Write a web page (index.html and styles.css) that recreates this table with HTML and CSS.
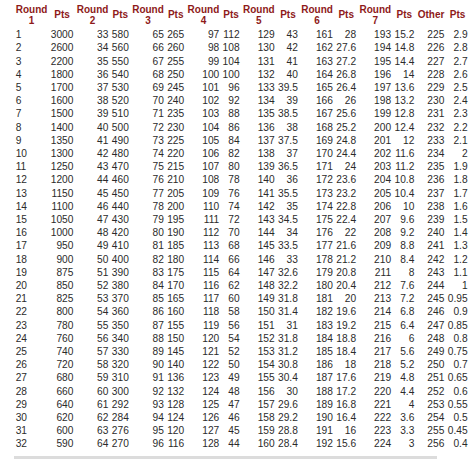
FILE: index.html
```html
<!DOCTYPE html>
<html>
<head>
<meta charset="utf-8">
<title>Points by pick</title>
<link rel="stylesheet" href="styles.css">
</head>
<body>
<div class="page">
<table class="scores">
<thead>
<tr><th>Round<br>1</th><th>Pts</th><th>Round<br>2</th><th>Pts</th><th>Round<br>3</th><th>Pts</th><th>Round<br>4</th><th>Pts</th><th>Round<br>5</th><th>Pts</th><th>Round<br>6</th><th>Pts</th><th>Round<br>7</th><th>Pts</th><th>Other</th><th>Pts</th></tr>
</thead>
<tbody>
<tr><td>1</td><td>3000</td><td>33</td><td>580</td><td>65</td><td>265</td><td>97</td><td>112</td><td>129</td><td>43</td><td>161</td><td>28</td><td>193</td><td>15.2</td><td>225</td><td>2.9</td></tr>
<tr><td>2</td><td>2600</td><td>34</td><td>560</td><td>66</td><td>260</td><td>98</td><td>108</td><td>130</td><td>42</td><td>162</td><td>27.6</td><td>194</td><td>14.8</td><td>226</td><td>2.8</td></tr>
<tr><td>3</td><td>2200</td><td>35</td><td>550</td><td>67</td><td>255</td><td>99</td><td>104</td><td>131</td><td>41</td><td>163</td><td>27.2</td><td>195</td><td>14.4</td><td>227</td><td>2.7</td></tr>
<tr><td>4</td><td>1800</td><td>36</td><td>540</td><td>68</td><td>250</td><td>100</td><td>100</td><td>132</td><td>40</td><td>164</td><td>26.8</td><td>196</td><td>14</td><td>228</td><td>2.6</td></tr>
<tr><td>5</td><td>1700</td><td>37</td><td>530</td><td>69</td><td>245</td><td>101</td><td>96</td><td>133</td><td>39.5</td><td>165</td><td>26.4</td><td>197</td><td>13.6</td><td>229</td><td>2.5</td></tr>
<tr><td>6</td><td>1600</td><td>38</td><td>520</td><td>70</td><td>240</td><td>102</td><td>92</td><td>134</td><td>39</td><td>166</td><td>26</td><td>198</td><td>13.2</td><td>230</td><td>2.4</td></tr>
<tr><td>7</td><td>1500</td><td>39</td><td>510</td><td>71</td><td>235</td><td>103</td><td>88</td><td>135</td><td>38.5</td><td>167</td><td>25.6</td><td>199</td><td>12.8</td><td>231</td><td>2.3</td></tr>
<tr><td>8</td><td>1400</td><td>40</td><td>500</td><td>72</td><td>230</td><td>104</td><td>86</td><td>136</td><td>38</td><td>168</td><td>25.2</td><td>200</td><td>12.4</td><td>232</td><td>2.2</td></tr>
<tr><td>9</td><td>1350</td><td>41</td><td>490</td><td>73</td><td>225</td><td>105</td><td>84</td><td>137</td><td>37.5</td><td>169</td><td>24.8</td><td>201</td><td>12</td><td>233</td><td>2.1</td></tr>
<tr><td>10</td><td>1300</td><td>42</td><td>480</td><td>74</td><td>220</td><td>106</td><td>82</td><td>138</td><td>37</td><td>170</td><td>24.4</td><td>202</td><td>11.6</td><td>234</td><td>2</td></tr>
<tr><td>11</td><td>1250</td><td>43</td><td>470</td><td>75</td><td>215</td><td>107</td><td>80</td><td>139</td><td>36.5</td><td>171</td><td>24</td><td>203</td><td>11.2</td><td>235</td><td>1.9</td></tr>
<tr><td>12</td><td>1200</td><td>44</td><td>460</td><td>76</td><td>210</td><td>108</td><td>78</td><td>140</td><td>36</td><td>172</td><td>23.6</td><td>204</td><td>10.8</td><td>236</td><td>1.8</td></tr>
<tr><td>13</td><td>1150</td><td>45</td><td>450</td><td>77</td><td>205</td><td>109</td><td>76</td><td>141</td><td>35.5</td><td>173</td><td>23.2</td><td>205</td><td>10.4</td><td>237</td><td>1.7</td></tr>
<tr><td>14</td><td>1100</td><td>46</td><td>440</td><td>78</td><td>200</td><td>110</td><td>74</td><td>142</td><td>35</td><td>174</td><td>22.8</td><td>206</td><td>10</td><td>238</td><td>1.6</td></tr>
<tr><td>15</td><td>1050</td><td>47</td><td>430</td><td>79</td><td>195</td><td>111</td><td>72</td><td>143</td><td>34.5</td><td>175</td><td>22.4</td><td>207</td><td>9.6</td><td>239</td><td>1.5</td></tr>
<tr><td>16</td><td>1000</td><td>48</td><td>420</td><td>80</td><td>190</td><td>112</td><td>70</td><td>144</td><td>34</td><td>176</td><td>22</td><td>208</td><td>9.2</td><td>240</td><td>1.4</td></tr>
<tr><td>17</td><td>950</td><td>49</td><td>410</td><td>81</td><td>185</td><td>113</td><td>68</td><td>145</td><td>33.5</td><td>177</td><td>21.6</td><td>209</td><td>8.8</td><td>241</td><td>1.3</td></tr>
<tr><td>18</td><td>900</td><td>50</td><td>400</td><td>82</td><td>180</td><td>114</td><td>66</td><td>146</td><td>33</td><td>178</td><td>21.2</td><td>210</td><td>8.4</td><td>242</td><td>1.2</td></tr>
<tr><td>19</td><td>875</td><td>51</td><td>390</td><td>83</td><td>175</td><td>115</td><td>64</td><td>147</td><td>32.6</td><td>179</td><td>20.8</td><td>211</td><td>8</td><td>243</td><td>1.1</td></tr>
<tr><td>20</td><td>850</td><td>52</td><td>380</td><td>84</td><td>170</td><td>116</td><td>62</td><td>148</td><td>32.2</td><td>180</td><td>20.4</td><td>212</td><td>7.6</td><td>244</td><td>1</td></tr>
<tr><td>21</td><td>825</td><td>53</td><td>370</td><td>85</td><td>165</td><td>117</td><td>60</td><td>149</td><td>31.8</td><td>181</td><td>20</td><td>213</td><td>7.2</td><td>245</td><td>0.95</td></tr>
<tr><td>22</td><td>800</td><td>54</td><td>360</td><td>86</td><td>160</td><td>118</td><td>58</td><td>150</td><td>31.4</td><td>182</td><td>19.6</td><td>214</td><td>6.8</td><td>246</td><td>0.9</td></tr>
<tr><td>23</td><td>780</td><td>55</td><td>350</td><td>87</td><td>155</td><td>119</td><td>56</td><td>151</td><td>31</td><td>183</td><td>19.2</td><td>215</td><td>6.4</td><td>247</td><td>0.85</td></tr>
<tr><td>24</td><td>760</td><td>56</td><td>340</td><td>88</td><td>150</td><td>120</td><td>54</td><td>152</td><td>31.8</td><td>184</td><td>18.8</td><td>216</td><td>6</td><td>248</td><td>0.8</td></tr>
<tr><td>25</td><td>740</td><td>57</td><td>330</td><td>89</td><td>145</td><td>121</td><td>52</td><td>153</td><td>31.2</td><td>185</td><td>18.4</td><td>217</td><td>5.6</td><td>249</td><td>0.75</td></tr>
<tr><td>26</td><td>720</td><td>58</td><td>320</td><td>90</td><td>140</td><td>122</td><td>50</td><td>154</td><td>30.8</td><td>186</td><td>18</td><td>218</td><td>5.2</td><td>250</td><td>0.7</td></tr>
<tr><td>27</td><td>680</td><td>59</td><td>310</td><td>91</td><td>136</td><td>123</td><td>49</td><td>155</td><td>30.4</td><td>187</td><td>17.6</td><td>219</td><td>4.8</td><td>251</td><td>0.65</td></tr>
<tr><td>28</td><td>660</td><td>60</td><td>300</td><td>92</td><td>132</td><td>124</td><td>48</td><td>156</td><td>30</td><td>188</td><td>17.2</td><td>220</td><td>4.4</td><td>252</td><td>0.6</td></tr>
<tr><td>29</td><td>640</td><td>61</td><td>292</td><td>93</td><td>128</td><td>125</td><td>47</td><td>157</td><td>29.6</td><td>189</td><td>16.8</td><td>221</td><td>4</td><td>253</td><td>0.55</td></tr>
<tr><td>30</td><td>620</td><td>62</td><td>284</td><td>94</td><td>124</td><td>126</td><td>46</td><td>158</td><td>29.2</td><td>190</td><td>16.4</td><td>222</td><td>3.6</td><td>254</td><td>0.5</td></tr>
<tr><td>31</td><td>600</td><td>63</td><td>276</td><td>95</td><td>120</td><td>127</td><td>45</td><td>159</td><td>28.8</td><td>191</td><td>16</td><td>223</td><td>3.3</td><td>255</td><td>0.45</td></tr>
<tr><td>32</td><td>590</td><td>64</td><td>270</td><td>96</td><td>116</td><td>128</td><td>44</td><td>160</td><td>28.4</td><td>192</td><td>15.6</td><td>224</td><td>3</td><td>256</td><td>0.4</td></tr>
</tbody>
</table>
<div class="hscroll"></div>
</div>
</body>
</html>
```

FILE: styles.css
```css
html, body {
  margin: 0;
  padding: 0;
  background: #ffffff;
  overflow: hidden;
}

.page {
  padding-left: 14px;
  font-family: "Liberation Sans", Arial, sans-serif;
}

.scores {
  border-collapse: separate;
  border-spacing: 0;
}

.scores th {
  font-size: 10px;
  font-weight: bold;
  color: #8e1a1a;
  line-height: 11.5px;
  padding: 3.7px 1.7px 1.5px;
  text-align: center;
  vertical-align: middle;
  white-space: nowrap;
}

.scores td {
  font-size: 10.2px;
  line-height: 13.2px;
  padding: 0 1.7px;
  text-align: right;
  color: #2b2b2b;
  white-space: nowrap;
}

.scores td:first-child {
  text-align: left;
}

.hscroll {
  margin-top: 5.4px;
  width: 423px;
  height: 4px;
  background: #dcdcdc;
}
```
